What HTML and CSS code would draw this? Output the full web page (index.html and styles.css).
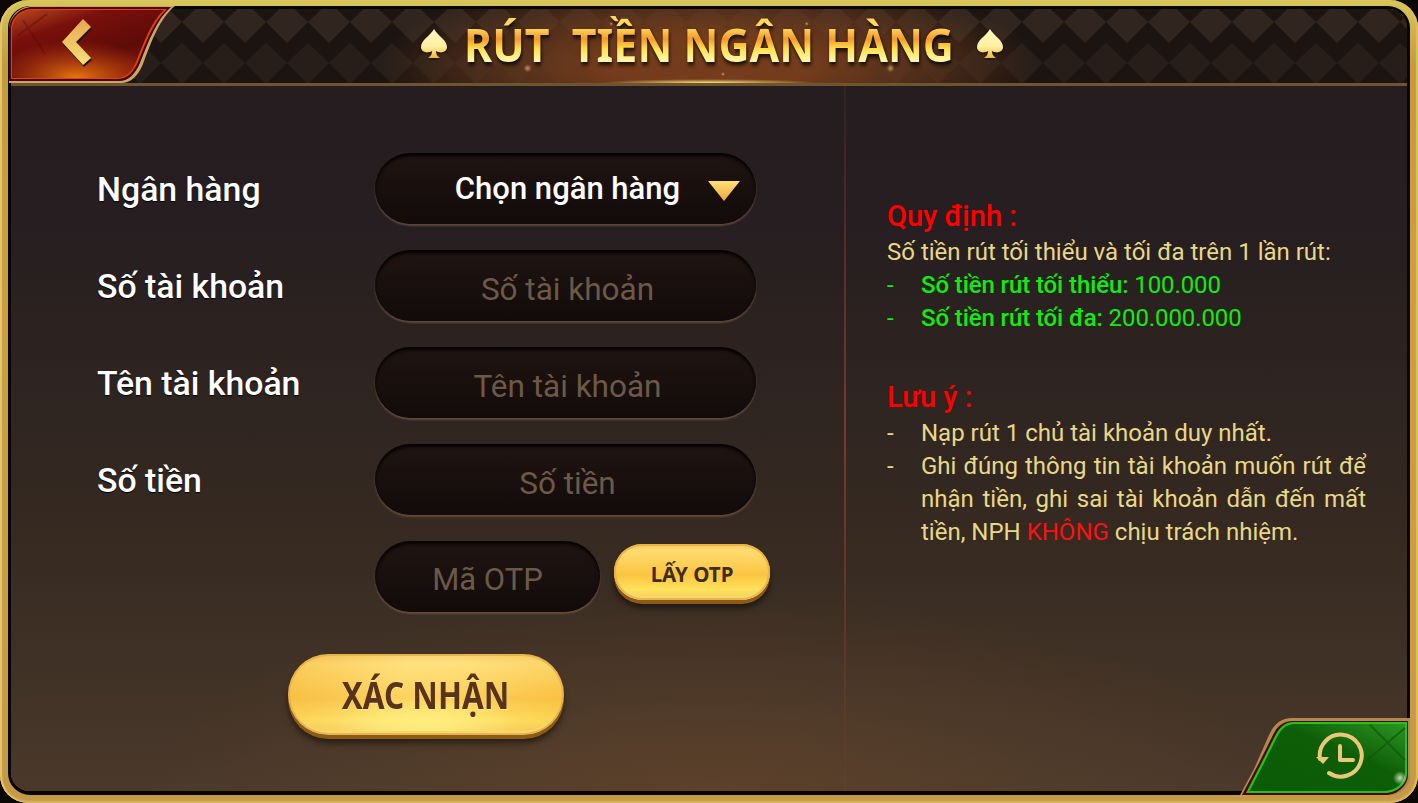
FILE: index.html
```html
<!DOCTYPE html>
<html lang="vi">
<head>
<meta charset="UTF-8">
<title>Rút tiền ngân hàng</title>
<link rel="stylesheet" href="styles.css">
</head>
<body>

<div class="frame">
<div class="panel">

    <!-- Header -->
    <header class="header">
        <svg class="pattern" width="100%" height="100%">
            <defs>
                <pattern id="diamonds" width="42" height="82" patternUnits="userSpaceOnUse" x="3" y="-7">
                    <polygon points="21,0 42,20 21,41 0,20" fill="#30261f"/>
                    <polygon points="0,41 21,61 0,82" fill="#271e19"/>
                    <polygon points="42,41 21,61 42,82" fill="#271e19"/>
                </pattern>
            </defs>
            <rect width="100%" height="100%" fill="url(#diamonds)"/>
        </svg>
        <div class="header-glow"></div>

        <h1 class="title">
            <svg class="spade" width="28" height="30" viewBox="0 0 28 30">
                <defs>
                    <linearGradient id="spadeFill" x1="0" y1="0" x2="0" y2="1">
                        <stop offset="0" stop-color="#fff6c0"/>
                        <stop offset="0.6" stop-color="#fff0a0"/>
                        <stop offset="1" stop-color="#f2b63c"/>
                    </linearGradient>
                </defs>
                <path d="M14 0C18 7 27 11 27 18C27 23 21 25 16 22C16 25 17 27 20 29H8C11 27 12 25 12 22C7 25 1 23 1 18C1 11 10 7 14 0Z" fill="url(#spadeFill)"/>
            </svg>
            <span class="title-text">RÚT&nbsp; TIỀN NGÂN HÀNG</span>
            <svg class="spade spade-right" width="28" height="30" viewBox="0 0 28 30">
                <path d="M14 0C18 7 27 11 27 18C27 23 21 25 16 22C16 25 17 27 20 29H8C11 27 12 25 12 22C7 25 1 23 1 18C1 11 10 7 14 0Z" fill="url(#spadeFill)"/>
            </svg>
        </h1>
    </header>

    <a class="back-btn" href="#" aria-label="Quay lại">
        <svg width="170" height="78" viewBox="0 0 170 78">
            <defs>
                <linearGradient id="redFill" x1="0" y1="0" x2="0.75" y2="1">
                    <stop offset="0" stop-color="#b84a20"/>
                    <stop offset="0.3" stop-color="#7a100c"/>
                    <stop offset="0.7" stop-color="#5e0b08"/>
                    <stop offset="1" stop-color="#7a1508"/>
                </linearGradient>
                <radialGradient id="redGlow" cx="0.42" cy="1" r="0.55">
                    <stop offset="0" stop-color="#f07a10" stop-opacity="0.95"/>
                    <stop offset="1" stop-color="#d04a10" stop-opacity="0"/>
                </radialGradient>
                <linearGradient id="chevron" x1="0" y1="0" x2="0" y2="1">
                    <stop offset="0" stop-color="#e8a850"/>
                    <stop offset="1" stop-color="#f6e07a"/>
                </linearGradient>
            </defs>
            <path d="M0 24C0 10 10 0 24 0H166C151 12 143 34 134 58C129 70 122 77 112 77H0Z" fill="#c9a76c"/>
            <path d="M0 24C0 11 11 1 24 1H162C148 13 140 34 131 57C126 68 120 75 110 75H0Z" fill="#4a0606"/>
            <path d="M2 24C2 11 12 3 24 3H158C145 15 137 36 129 56C124 67 118 73 108 73H2Z" fill="#e2420e"/>
            <path d="M3 24C3 12 13 4 24 4H155C142 16 135 36 127 56C123 66 117 72 107 72H3Z" fill="url(#redFill)"/>
            <path d="M3 24C3 12 13 4 24 4H155C142 16 135 36 127 56C123 66 117 72 107 72H3Z" fill="url(#redGlow)"/>
            <path d="M8 30L38 8M14 14L36 48" stroke="#5e0b08" stroke-width="2" opacity="0.45" fill="none"/>
            <polygon points="74,13 82,21 67,36 82,52 74,59 53,36" fill="#2a1205" transform="translate(1 2)"/>
            <polygon points="74,13 82,21 67,36 82,52 74,59 53,36" fill="url(#chevron)"/>
        </svg>
    </a>

    <main class="content">

        <!-- Withdraw form -->
        <form class="form">
            <div class="row">
                <label class="label">Ngân hàng</label>
                <div class="field select">
                    Chọn ngân hàng
                    <span class="arrow"></span>
                </div>
            </div>
            <div class="row">
                <label class="label" for="account">Số tài khoản</label>
                <input class="field" id="account" type="text" placeholder="Số tài khoản">
            </div>
            <div class="row">
                <label class="label" for="owner">Tên tài khoản</label>
                <input class="field" id="owner" type="text" placeholder="Tên tài khoản">
            </div>
            <div class="row">
                <label class="label" for="amount">Số tiền</label>
                <input class="field" id="amount" type="text" placeholder="Số tiền">
            </div>
            <div class="row otp-row">
                <input class="field otp-field" type="text" placeholder="Mã OTP">
                <button class="gold-btn otp-btn" type="button">LẤY OTP</button>
            </div>
            <button class="gold-btn submit-btn" type="submit"><span class="submit-text">XÁC NHẬN</span></button>
        </form>

        <!-- Rules -->
        <section class="notes">
            <h3 class="notes-title">Quy định :</h3>
            <p class="line">Số tiền rút tối thiểu và tối đa trên 1 lần rút:</p>
            <ul class="list green">
                <li><span class="dash">-</span><span><b>Số tiền rút tối thiểu:</b> 100.000</span></li>
                <li><span class="dash">-</span><span><b>Số tiền rút tối đa:</b> 200.000.000</span></li>
            </ul>

            <h3 class="notes-title second">Lưu ý :</h3>
            <ul class="list">
                <li><span class="dash">-</span><span>Nạp rút 1 chủ tài khoản duy nhất.</span></li>
                <li><span class="dash">-</span><span class="just">Ghi đúng thông tin tài khoản muốn rút để nhận tiền, ghi sai tài khoản dẫn đến mất tiền, NPH <em class="warn">KHÔNG</em> chịu trách nhiệm.</span></li>
            </ul>
        </section>
    </main>

    <!-- History button -->
    <a class="history-btn" href="#" aria-label="Lịch sử">
        <svg width="170" height="78" viewBox="0 0 170 78">
            <defs>
                <linearGradient id="greenFill" x1="0" y1="1" x2="1" y2="0">
                    <stop offset="0" stop-color="#0b5a06"/>
                    <stop offset="0.6" stop-color="#0e5e08"/>
                    <stop offset="1" stop-color="#2c9420"/>
                </linearGradient>
                <radialGradient id="glint">
                    <stop offset="0" stop-color="#eafbe0" stop-opacity="0.8"/>
                    <stop offset="1" stop-color="#eafbe0" stop-opacity="0"/>
                </radialGradient>
            </defs>
            <path d="M0 78L14 52L29 18C34 7 41 1 52 1H170V60C170 70 160 78 150 78Z" fill="#b5884e"/>
            <path d="M2 78L18 48L32 20C37 9 43 4 53 4H168V58C168 68 158 78 146 78Z" fill="#4a0606"/>
            <path d="M6 76L20 49L34 21C39 11 44 5 54 5H167V57C167 67 157 76 145 76Z" fill="#22c41c"/>
            <path d="M9 75L22 50L36 22C41 12 46 7 55 7H165V56C165 65 156 74 144 74H9Z" fill="url(#greenFill)"/>
            <path d="M130 8L165 43M165 11L127 43" stroke="#0d5a08" stroke-width="2" fill="none" opacity="0.7"/>
            <circle cx="160" cy="61" r="7" fill="url(#glint)"/>
            <g fill="none" stroke="#eac877" stroke-width="4" stroke-linecap="round" stroke-linejoin="round">
                <path d="M80 42A21 21 0 1 1 89 56"/>
                <path d="M100 29V43H113"/>
            </g>
            <polygon points="76,40 89,40 83,47" fill="#eac877"/>
        </svg>
    </a>

</div>
</div>

</body>
</html>
```

FILE: styles.css
```css
* {
    box-sizing: border-box;
}
html, body {
    margin: 0;
    height: 100%;
    overflow: hidden;
}
body {
    font-family: Roboto, "Liberation Sans", sans-serif;
    background-color: #0c0805;
}
.frame {
    width: 1418px;
    height: 803px;
    padding: 6px 8px 8px;
    border-radius: 28px;
    background: linear-gradient(180deg, #d6c65c 0, #c39b3c 8%, #c99f42 40%, #c49a48 100%);
    box-shadow: inset 2px 0 1px #e6c66c, inset 0 -2px 2px #d8b260, inset -2px 0 1px #e8c050;
}
.panel {
    position: relative;
    height: 100%;
    display: flex;
    flex-direction: column;
    border: 3px solid #0a0605;
    border-bottom-width: 4px;
    border-radius: 22px;
    background:
        radial-gradient(ellipse 560px 200px at 50% 100%, rgba(120, 78, 44, 0.4), rgba(120, 78, 44, 0)),
        linear-gradient(180deg, #241d20 0, #261e20 28%, #362a21 68%, #4a392b 100%);
    background-clip: padding-box;
}

/* Header */
.header {
    position: relative;
    flex: none;
    height: 77px;
    display: flex;
    justify-content: center;
    align-items: center;
    padding-bottom: 4px;
    background-color: #1c1411;
    border-bottom: 3px solid #6f5430;
    border-radius: 19px 19px 0 0;
    overflow: hidden;
}
.pattern {
    position: absolute;
    left: 0;
    top: 0;
}
.header-glow {
    position: absolute;
    inset: 0;
    background:
        radial-gradient(ellipse 110px 4px at 50% 100%, #ffe878, rgba(255, 224, 112, 0)),
        radial-gradient(circle 4px at 37% 80%, rgba(255, 210, 150, 0.6), rgba(255, 210, 150, 0)),
        radial-gradient(circle 4px at 63% 80%, rgba(255, 210, 150, 0.6), rgba(255, 210, 150, 0)),
        radial-gradient(circle 2px at 43% 20%, rgba(255, 190, 110, 0.7), rgba(255, 190, 110, 0)),
        radial-gradient(circle 2px at 57% 20%, rgba(255, 190, 110, 0.7), rgba(255, 190, 110, 0)),
        radial-gradient(circle 2px at 51% 88%, rgba(255, 190, 110, 0.7), rgba(255, 190, 110, 0)),
        radial-gradient(ellipse 330px 90px at 50% 75%, rgba(120, 62, 28, 0.95) 30%, rgba(100, 56, 30, 0.7) 65%, rgba(100, 56, 30, 0));
}
.back-btn {
    position: absolute;
    left: -2px;
    top: -3px;
    display: block;
    height: 78px;
}
.title {
    position: relative;
    margin: 0 0 0 6px;
    display: flex;
    align-items: center;
    gap: 16px;
    font-family: "Noto Sans", "Liberation Sans", sans-serif;
    font-size: 47px;
    font-weight: 700;
    line-height: 62px;
}
.title-text {
    margin: 0 -23px;
    transform: scaleX(0.914);
    background: linear-gradient(180deg, #ffd860 24%, #f29a2a 42%, #ffe04e 58%, #fff6a8 76%);
    -webkit-background-clip: text;
    background-clip: text;
    color: transparent;
    filter: drop-shadow(1px 3px 2px rgba(0, 0, 0, 0.8));
}
.spade {
    filter: drop-shadow(0 1px 1px rgba(0, 0, 0, 0.7));
}
.spade-right {
    margin-left: 6px;
}

/* Main layout */
.content {
    flex: 1;
    display: grid;
    grid-template-columns: 835px 1fr;
}

/* Form */
.form {
    padding: 67px 0 0 86px;
    border-right: 2px solid transparent;
    border-image: linear-gradient(180deg, rgba(110, 50, 36, 0.2), #7a3a2a 50%, rgba(110, 70, 40, 0.15)) 1;
}
.row {
    display: flex;
    align-items: center;
    margin-bottom: 26px;
}
.label {
    width: 278px;
    padding-top: 2px;
    font-size: 33.8px;
    font-weight: 500;
    color: #fff;
    text-shadow: 0 1px 1px #000;
}
.field {
    width: 381px;
    height: 71px;
    padding: 7px 20px 0 24px;
    border: none;
    border-radius: 36px;
    outline: none;
    text-align: center;
    font-family: inherit;
    font-size: 31.5px;
    color: #fff;
    background: linear-gradient(180deg, #1f1412, #120b0a);
    box-shadow: inset 0 3px 3px #060302, 0 2px 2px rgba(125, 95, 72, 0.65);
}
.field::placeholder {
    color: #6c5947;
    opacity: 1;
}
.select {
    position: relative;
    display: flex;
    justify-content: center;
    align-items: center;
    padding: 0 20px 0 24px;
    font-size: 31px;
    font-weight: 500;
}
.arrow {
    position: absolute;
    left: 333px;
    top: 28px;
    width: 32px;
    height: 20px;
    background: linear-gradient(180deg, #ffe07a, #eda73a);
    clip-path: polygon(0 0, 100% 0, 50% 100%);
}
.otp-row {
    margin: 0 0 42px 278px;
    gap: 14px;
}
.otp-field {
    width: 225px;
    padding: 6px 10px 0;
    font-size: 31px;
}

/* Gold buttons */
.gold-btn {
    display: block;
    border: none;
    border-radius: 50px;
    font-family: "Noto Sans", "Liberation Sans", sans-serif;
    font-weight: 700;
    background: linear-gradient(180deg, #f4c55e 0, #ffdc70 12%, #fbc542 55%, #ffe25c 82%, #f4ca5c 100%);
    box-shadow:
        inset 0 0 0 2px rgba(232, 176, 70, 0.9),
        inset 0 -4px 0 #f6d870,
        0 4px 0 #8e5a18,
        0 8px 6px rgba(0, 0, 0, 0.5);
    cursor: pointer;
}
.otp-btn {
    width: 156px;
    height: 56px;
    margin-top: -9px;
    padding-top: 4px;
    font-size: 20.5px;
    color: #3f2d22;
}
.submit-btn {
    width: 276px;
    height: 81px;
    margin-left: 191px;
    font-size: 37px;
    color: #59341a;
    background:
        radial-gradient(ellipse 90px 26px at 50% 85%, rgba(255, 240, 130, 0.85), rgba(255, 240, 130, 0)),
        linear-gradient(112deg, rgba(240, 170, 50, 0.35), rgba(255, 238, 160, 0.3) 40%, rgba(255, 238, 160, 0.25) 60%, rgba(240, 170, 50, 0.25)),
        linear-gradient(180deg, #f4c55e 0, #ffdc70 12%, #fbc542 55%, #ffe25c 82%, #f4ca5c 100%);
}
.submit-text {
    display: inline-block;
    transform: scaleX(0.85);
    text-shadow: 0 1px 1px #ffe9a0;
}

/* Rules */
.notes {
    padding: 112px 0 0 41px;
    font-size: 24px;
    line-height: 33px;
    color: #e8d888;
}
.notes-title {
    margin: 0 0 1px;
    font-size: 29px;
    line-height: 37px;
    font-weight: 500;
    color: #ff0000;
}
.notes-title.second {
    margin-top: 44px;
}
.line {
    margin: 0;
}
.list {
    margin: 0;
    padding: 0;
    list-style: none;
}
.list li {
    display: flex;
    width: 479px;
}
.list.green {
    color: #10ec10;
    letter-spacing: -0.1px;
}
.list b {
    font-weight: 500;
}
.dash {
    flex: none;
    width: 34px;
}
.just {
    text-align: justify;
}
.warn {
    font-style: normal;
    color: #ff1010;
}

/* History */
.history-btn {
    position: absolute;
    right: -3px;
    bottom: -4px;
    display: block;
    height: 78px;
}
```
